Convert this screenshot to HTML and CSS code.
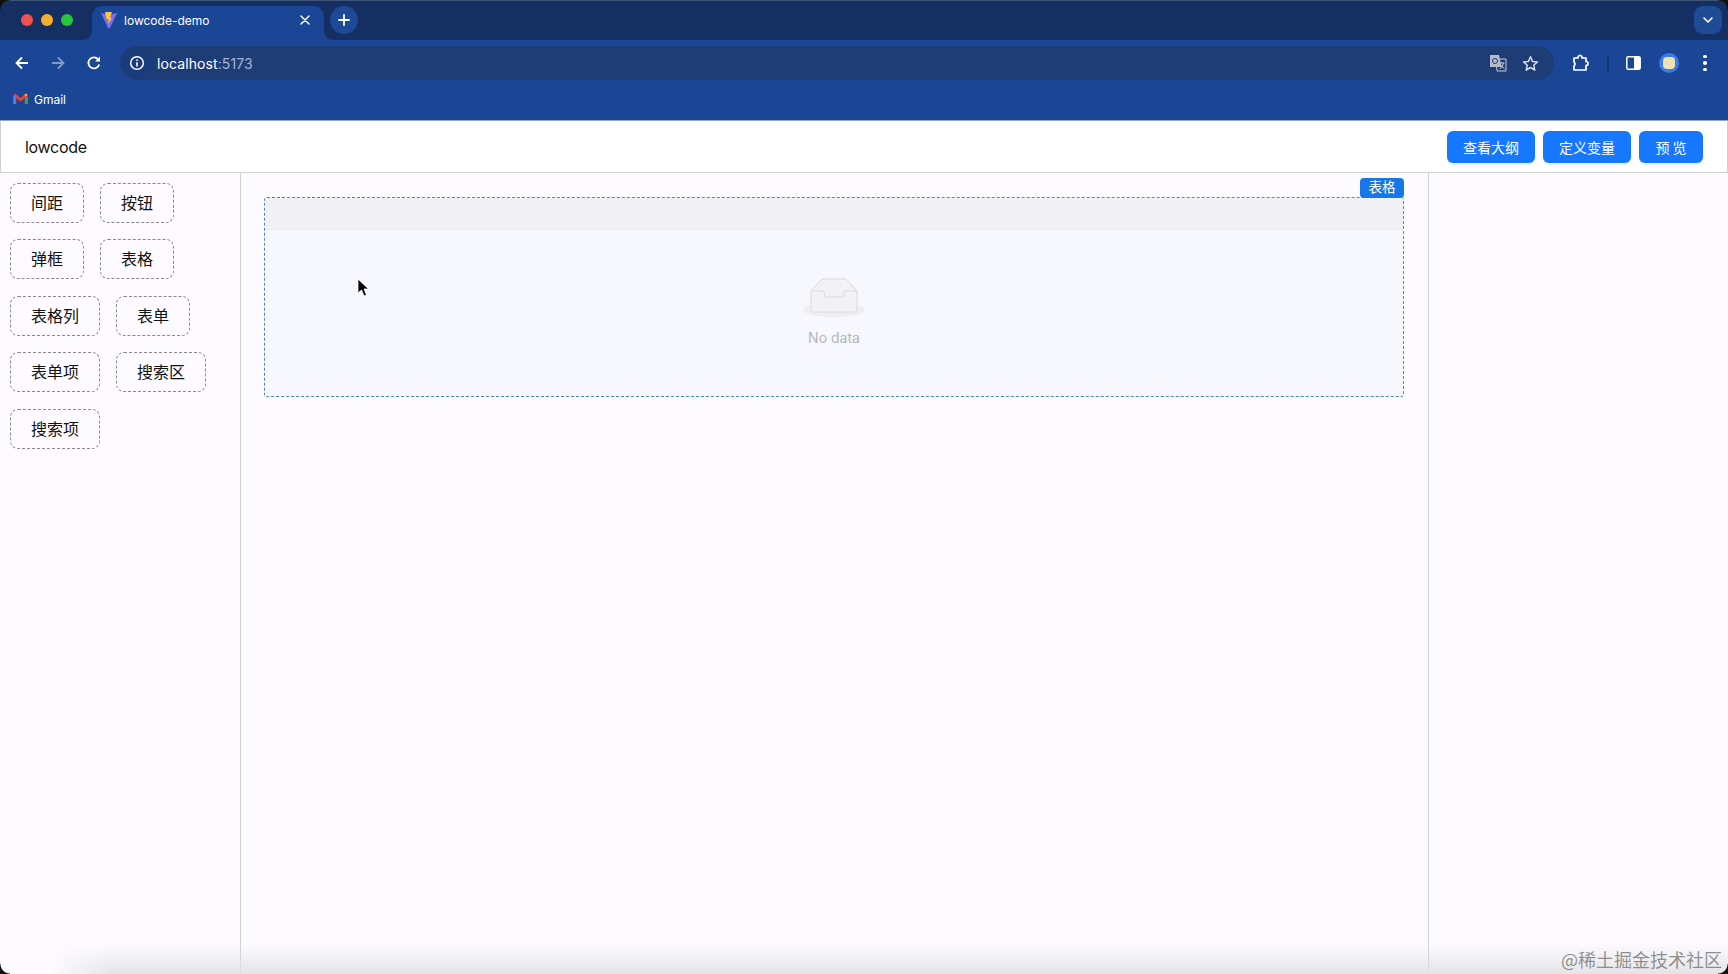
FILE: index.html
```html
<!DOCTYPE html>
<html lang="zh-CN">
<head>
<meta charset="utf-8">
<title>lowcode-demo</title>
<link rel="stylesheet" href="styles.css">
</head>
<body>
<div class="browser">
  <div class="tabstrip">
    <div class="lights"><i class="light red"></i><i class="light yellow"></i><i class="light green"></i></div>
    <div class="tab">
      <svg class="favicon" width="18" height="18" viewBox="0 0 18 18"><path d="M1 2 L9 4 L17 2 L10 17 Q9 18 8 17 Z" fill="#7c6cf0"/><path d="M5 1 L12 1 L10 7 L12 7 L8 13 L8.5 8 L6.5 8 Z" fill="#ffc53d"/></svg>
      <span class="tab-title">lowcode-demo</span>
      <svg class="tab-close" width="10" height="10" viewBox="0 0 10 10"><path d="M1 1 L9 9 M9 1 L1 9" stroke="#fff" stroke-width="1.5" stroke-linecap="round"/></svg>
    </div>
    <div class="newtab"><svg width="12" height="12" viewBox="0 0 12 12"><path d="M6 1 V11 M1 6 H11" stroke="#fff" stroke-width="1.8" stroke-linecap="round"/></svg></div>
    <div class="tabmenu"><svg width="10" height="6" viewBox="0 0 10 6"><path d="M1 1 L5 5 L9 1" fill="none" stroke="#fff" stroke-width="1.6" stroke-linecap="round" stroke-linejoin="round"/></svg></div>
  </div>
  <div class="toolbar">
    <svg class="nav" width="16" height="16" viewBox="0 0 16 16"><path d="M14 8 H3 M8 2.5 L2.5 8 L8 13.5" fill="none" stroke="#fff" stroke-width="1.8"/></svg>
    <svg class="nav dim" width="16" height="16" viewBox="0 0 16 16"><path d="M2 8 H13 M8 2.5 L13.5 8 L8 13.5" fill="none" stroke="#7f9ccb" stroke-width="1.8"/></svg>
    <svg class="nav" width="16" height="16" viewBox="0 0 16 16"><path d="M13.2 9.5 A5.5 5.5 0 1 1 12 4.2" fill="none" stroke="#fff" stroke-width="1.8"/><path d="M14 1.5 V6.5 H9 Z" fill="#fff"/></svg>
    <div class="omnibox">
      <div class="site-info"><svg width="16" height="16" viewBox="0 0 16 16"><circle cx="8" cy="8" r="6.3" fill="none" stroke="#fff" stroke-width="1.5"/><path d="M8 7.2 V11.6 M8 4.4 V5.9" stroke="#fff" stroke-width="1.6"/></svg></div>
      <span class="url">localhost<span class="url-port">:5173</span></span>
      <svg class="translate" width="18" height="18" viewBox="0 0 18 18"><path d="M7 5 H17 V17 H8 Z" fill="#1e3c75" stroke="#c3ccdc" stroke-width="1"/><path d="M1 1 H10 L12.600 13 H1 Z" fill="#b4bcc9"/><circle cx="6" cy="7" r="2.500" fill="none" stroke="#1e3c75" stroke-width="1"/><path d="M10.500 9 H15.500 M13 8 V9 M11 15 Q14 12.500 14.500 9 M11.500 10.500 Q13 13.500 15.500 14.500" fill="none" stroke="#c3ccdc" stroke-width="1"/></svg>
      <svg class="star" width="17" height="17" viewBox="0 0 17 17"><path d="M8.500 1.800 L10.500 6.400 L15.500 6.900 L11.700 10.200 L12.800 15.100 L8.500 12.500 L4.200 15.100 L5.300 10.200 L1.500 6.900 L6.500 6.400 Z" fill="none" stroke="#d5dcec" stroke-width="1.500" stroke-linejoin="round"/></svg>
    </div>
    <svg class="puzzle" width="18" height="18" viewBox="0 0 18 18"><path d="M2 4 H6 A2 2 0 0 1 10 3 V4 H14 V7.500 A2 2 0 0 1 14 11.500 V16 H2 V12 A2.500 2.500 0 0 0 2 8 Z" fill="none" stroke="#fff" stroke-width="1.700" stroke-linejoin="round"/></svg>
    <i class="divider"></i>
    <svg class="sidepanel" width="15" height="14" viewBox="0 0 15 14"><rect x="0.800" y="0.800" width="13.400" height="12.400" rx="1.500" fill="none" stroke="#fff" stroke-width="1.500"/><rect x="8" y="1" width="6" height="12" fill="#fff"/></svg>
    <div class="avatar"><i class="avatar-inner"></i></div>
    <div class="kebab"><i></i><i></i><i></i></div>
  </div>
  <div class="bookmarks">
    <svg width="15" height="12" viewBox="0 0 15 12"><path d="M2 11 V2 L7.500 7 L13 2 V11" fill="none" stroke="#ea4335" stroke-width="2.600" stroke-linejoin="round"/><path d="M1.500 3 V11" stroke="#4285f4" stroke-width="2.600"/><path d="M13.500 4 V11" stroke="#34a853" stroke-width="2.600"/><path d="M12 2.500 L14 1.500" stroke="#fbbc04" stroke-width="2.200"/></svg>
    <span class="bookmark-label">Gmail</span>
  </div>
</div>
<div class="app">
  <header class="app-header">
    <span class="brand">lowcode</span>
    <div class="actions">
      <button class="primary">查看大纲</button>
      <button class="primary">定义变量</button>
      <button class="primary short">预 览</button>
    </div>
  </header>
  <main class="workspace">
    <aside class="palette">
      <div class="chip-row"><div class="chip">间距</div><div class="chip">按钮</div></div>
      <div class="chip-row"><div class="chip">弹框</div><div class="chip">表格</div></div>
      <div class="chip-row"><div class="chip">表格列</div><div class="chip">表单</div></div>
      <div class="chip-row"><div class="chip">表单项</div><div class="chip">搜索区</div></div>
      <div class="chip-row"><div class="chip">搜索项</div></div>
    </aside>
    <section class="canvas">
      <div class="table-box">
        <span class="tag">表格</span>
        <div class="thead"></div>
        <div class="empty">
          <svg width="64" height="41" viewBox="0 0 64 41"><ellipse cx="32" cy="33" rx="31" ry="7" fill="#efeff3"/><path d="M9 14 L20 2 H44 L55 14 V33 Q55 35 53 35 H11 Q9 35 9 33 Z" fill="#f2f2f6" stroke="#d8d8de"/><path d="M9 14 H20 Q22 14 22 16 Q22 20 25 20 H39 Q42 20 42 16 Q42 14 44 14 H55" fill="none" stroke="#d8d8de"/></svg>
          <span class="empty-text">No data</span>
        </div>
      </div>
    </section>
    <aside class="inspector"></aside>
  </main>
</div>
<svg class="cursor" width="13" height="20" viewBox="0 0 13 20"><path d="M1 1 V15 L4.500 12 L7 18 L9.500 17 L7 11 H11.500 Z" fill="#000" stroke="#fff" stroke-width="0.800"/></svg>
<div class="bottom-fade"></div>
<span class="watermark">@稀土掘金技术社区</span>
<i class="corner corner-bl"></i>
<i class="corner corner-br"></i>
<i class="corner corner-tl"></i>
<i class="corner corner-tr"></i>
</body>
</html>
```
FILE: styles.css
```css
* { box-sizing: border-box; }
html, body { margin: 0; height: 974px; overflow: hidden; }
body { position: relative; width: 1728px; font-family: Inter, "Noto Sans CJK SC", sans-serif; background: #fdfbff; display: flex; flex-direction: column; }
button { font: inherit; }

.browser { height: 121px; flex: none; background: #1b4695; border-bottom: 1px solid #8fa6c6; color: #fff; }
.tabstrip { height: 40px; background: #162f63; border-top: 1px solid #3d5478; display: flex; align-items: flex-start; position: relative; padding-left: 21px; }
.lights { display: flex; gap: 8px; margin-top: 13px; width: 71px; }
.light { width: 12px; height: 12px; border-radius: 50%; }
.red { background: #f0524f; }
.yellow { background: #f5b02e; }
.green { background: #29c440; }
.tab { position: relative; width: 232px; height: 34px; margin-top: 5px; background: #1b4695; border-radius: 10px 10px 0 0; display: flex; align-items: center; padding: 0 10px 6px 8px; }
.tab::before, .tab::after { content: ""; position: absolute; bottom: 0; width: 8px; height: 8px; }
.tab::before { left: -8px; background: radial-gradient(circle at 0 0, transparent 7.500px, #1b4695 8px); }
.tab::after { right: -8px; background: radial-gradient(circle at 100% 0, transparent 7.500px, #1b4695 8px); }
.favicon { flex: none; }
.tab-title { font-size: 12px; margin-left: 6px; flex: 1; }
.tab-close { flex: none; margin-right: 4px; }
.newtab { width: 28px; height: 28px; border-radius: 50%; background: #1f4a96; margin: 5px 0 0 6px; display: flex; align-items: center; justify-content: center; }
.tabmenu { width: 28px; height: 28px; border-radius: 9px; background: #1f4a96; margin: 5px 6px 0 auto; display: flex; align-items: center; justify-content: center; }

.toolbar { height: 46px; display: flex; align-items: center; padding-left: 14px; }
.nav { flex: none; margin-right: 20px; }
.omnibox { width: 1434px; height: 34px; margin-left: -2px; border-radius: 17px; background: #1e3c75; display: flex; align-items: center; padding-left: 3px; }
.site-info { width: 28px; height: 28px; border-radius: 50%; background: #1b3c7c; display: flex; align-items: center; justify-content: center; flex: none; }
.url { font-size: 14px; margin-left: 6px; flex: 1; letter-spacing: 0.100px; }
.url-port { color: #a3b5d3; }
.translate { flex: none; margin-right: 15px; }
.star { flex: none; margin-right: 15px; }
.puzzle { flex: none; margin-left: 18px; }
.divider { width: 2px; height: 16px; background: #15356f; margin: 0 17px; flex: none; }
.sidepanel { flex: none; }
.avatar { width: 20px; height: 20px; border-radius: 50%; background: #3b7be8; margin-left: 18px; display: flex; align-items: center; justify-content: center; flex: none; }
.avatar-inner { width: 12px; height: 12px; border-radius: 4px; background: #f1e3b0; }
.kebab { margin-left: 24px; display: flex; flex-direction: column; gap: 3px; flex: none; }
.kebab i { width: 3.500px; height: 3.500px; border-radius: 50%; background: #fff; }

.bookmarks { height: 34px; display: flex; align-items: center; padding: 0 0 8px 13px; }
.bookmark-label { font-size: 12px; margin-left: 6px; }

.app { flex: 1; display: flex; flex-direction: column; min-height: 0; }
.app-header { height: 52px; flex: none; display: flex; align-items: center; justify-content: space-between; border-bottom: 1px solid #cfcfd4; border-left: 1px solid #cfcfd4; border-right: 1px solid #cfcfd4; padding: 0 24px; background: #fff; }
.brand { font-size: 16px; color: #111; letter-spacing: -0.300px; }
.actions { display: flex; gap: 8px; }
.primary { width: 88px; height: 32px; border: 0; border-radius: 6px; background: #1677ff; color: #fff; font-family: "Noto Sans CJK SC", sans-serif; font-size: 14px; padding: 0; box-shadow: 0 2px 0 rgba(5, 145, 255, 0.100); }
.short { width: 64px; }

.workspace { flex: 1; display: flex; min-height: 0; }
.palette { width: 241px; flex: none; border-right: 1px solid #cfcfd4; padding: 10px 10px; display: flex; flex-direction: column; gap: 16.400px; }
.chip-row { display: flex; gap: 16px; }
.chip { height: 40px; padding: 0 20px 2px; border: 1px dashed #8a8a8a; border-radius: 8px; font-family: "Noto Sans CJK SC", sans-serif; font-size: 16px; color: #111; display: flex; align-items: center; }

.canvas { flex: 1; padding: 24px 24px 0 23px; min-width: 0; }
.table-box { position: relative; height: 200px; border: 1px dashed #4a86c8; border-radius: 3px; background: #f7f8fd; }
.tag { position: absolute; top: -20px; right: -1px; width: 44px; height: 20px; background: #1677e8; border-radius: 4px; color: #fff; font-family: "Noto Sans CJK SC", sans-serif; font-size: 13.500px; line-height: 17px; text-align: center; }
.thead { height: 32px; background: #f1f1f5; border-bottom: 1px solid #e9e9ee; }
.empty { display: flex; flex-direction: column; align-items: center; padding-top: 47px; }
.empty-text { font-size: 14px; color: #b5b5bb; margin-top: 11px; }

.inspector { width: 300px; flex: none; border-left: 1px solid #cfcfd4; }

.cursor { position: absolute; left: 357px; top: 278px; }
.bottom-fade { position: absolute; left: 0; right: 0; bottom: 0; height: 30px; background: linear-gradient(to bottom, rgba(225, 225, 228, 0), rgba(225, 225, 228, 0.900)); -webkit-mask-image: linear-gradient(to right, transparent 50px, #000 110px); mask-image: linear-gradient(to right, transparent 50px, #000 110px); pointer-events: none; }
.watermark { position: absolute; right: 6px; bottom: 2px; font-family: "Noto Sans CJK SC", sans-serif; font-size: 18px; color: rgba(110, 110, 110, 0.750); }
.corner { position: absolute; width: 10px; height: 10px; }
.corner-bl { left: 0; bottom: 0; background: radial-gradient(circle at 100% 0, transparent 9px, #111 10px); }
.corner-br { right: 0; bottom: 0; background: radial-gradient(circle at 0 0, transparent 9px, #111 10px); }
.corner-tl { left: 0; top: 0; background: radial-gradient(circle at 100% 100%, transparent 9px, #111 10px); }
.corner-tr { right: 0; top: 0; background: radial-gradient(circle at 0 100%, transparent 9px, #111 10px); }
```
